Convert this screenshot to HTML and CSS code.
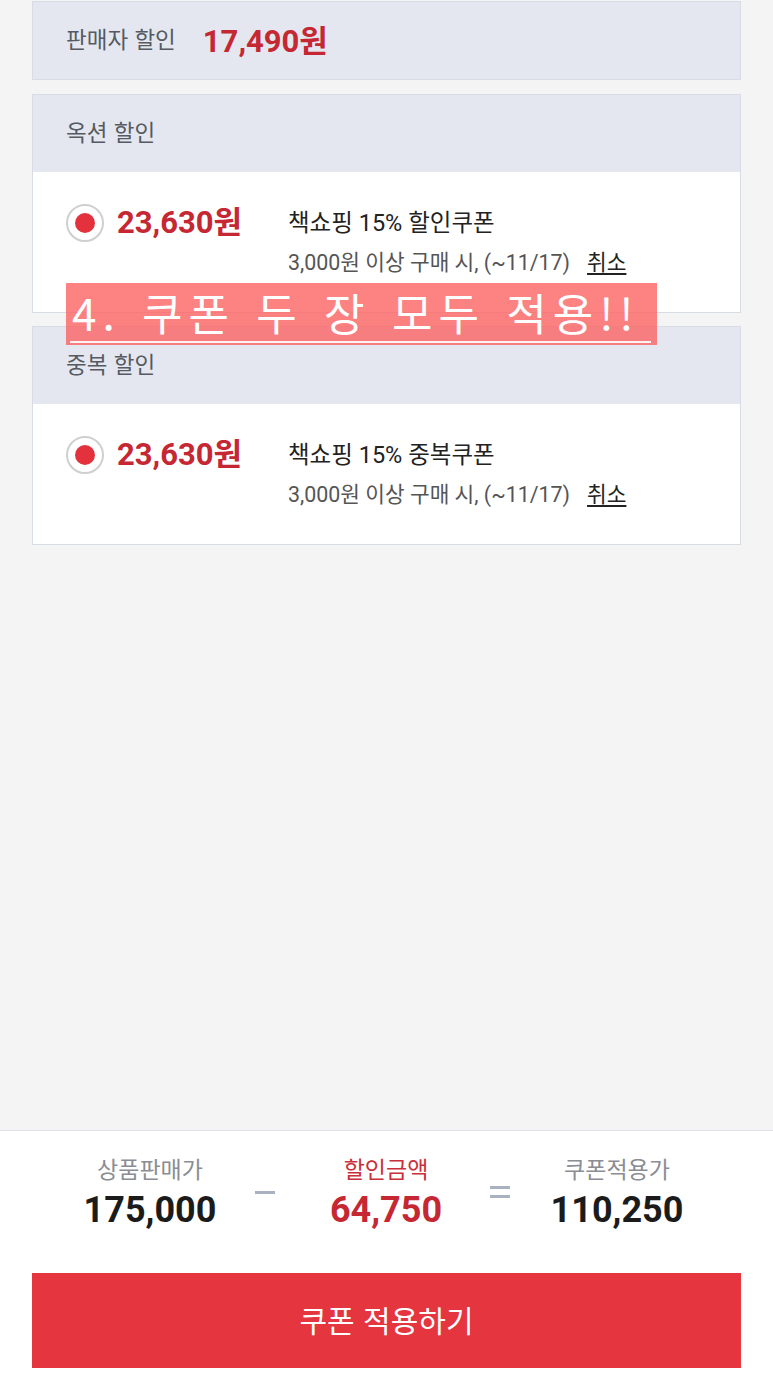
FILE: index.html
```html
<!DOCTYPE html>
<html lang="ko">
<head>
<meta charset="utf-8">
<title>쿠폰 적용</title>
<link rel="stylesheet" href="styles.css">
</head>
<body>
<div class="page">
  <main class="content">
    <section class="box seller">
      <span class="seller-label">판매자 할인</span>
      <span class="seller-price">17,490원</span>
    </section>

    <section class="box coupon">
      <div class="coupon-head">옥션 할인</div>
      <div class="coupon-body">
        <span class="radio"><span class="radio-dot"></span></span>
        <span class="coupon-price">23,630원</span>
        <div class="coupon-info">
          <div class="coupon-name">책쇼핑 15% 할인쿠폰</div>
          <div class="coupon-cond">3,000원 이상 구매 시, (~11/17)<a class="cancel">취소</a></div>
        </div>
      </div>
    </section>

    <section class="box coupon">
      <div class="coupon-head">중복 할인</div>
      <div class="coupon-body">
        <span class="radio"><span class="radio-dot"></span></span>
        <span class="coupon-price">23,630원</span>
        <div class="coupon-info">
          <div class="coupon-name">책쇼핑 15% 중복쿠폰</div>
          <div class="coupon-cond">3,000원 이상 구매 시, (~11/17)<a class="cancel">취소</a></div>
        </div>
      </div>
    </section>

    <div class="note"><span class="note-text">4. 쿠폰 두 장 모두 적용!!</span></div>
  </main>

  <footer class="footer">
    <div class="summary">
      <div class="sum-col">
        <div class="sum-label">상품판매가</div>
        <div class="sum-value">175,000</div>
      </div>
      <div class="op"><span class="bar"></span></div>
      <div class="sum-col red">
        <div class="sum-label">할인금액</div>
        <div class="sum-value">64,750</div>
      </div>
      <div class="op eq"><span class="bar"></span><span class="bar"></span></div>
      <div class="sum-col">
        <div class="sum-label">쿠폰적용가</div>
        <div class="sum-value">110,250</div>
      </div>
    </div>
    <button class="apply">쿠폰 적용하기</button>
  </footer>
</div>
</body>
</html>
```

FILE: styles.css
```css
* { box-sizing: border-box; }

html, body {
  margin: 0;
  padding: 0;
}

body {
  background: #f4f4f4;
  font-family: Roboto, "Noto Sans CJK KR", sans-serif;
  color: #222;
}

.page {
  display: flex;
  flex-direction: column;
  height: 1373px;
}

.content {
  position: relative;
  flex: 1;
  padding: 1px 32px 0 32px;
  display: flex;
  flex-direction: column;
  gap: 13px;
}

.box {
  border: 1px solid #d8dce4;
  width: 709px;
}

.seller {
  height: 79px;
  margin-bottom: 1px;
  background: #e4e7ef;
  display: flex;
  align-items: center;
  padding: 0 0 5px 33px;
  gap: 27px;
}

.seller-label {
  font-family: "Noto Sans CJK KR", sans-serif;
  font-size: 22.5px;
  color: #555a63;
}

.seller-price {
  font-size: 31px;
  font-weight: 700;
  color: #c52733;
}

.coupon {
  height: 219px;
  background: #fff;
  display: flex;
  flex-direction: column;
}

.coupon-head {
  height: 77px;
  background: #e4e7ef;
  display: flex;
  align-items: center;
  padding: 0 0 6px 33px;
  font-family: "Noto Sans CJK KR", sans-serif;
  font-size: 22.5px;
  color: #555a63;
}

.coupon-body {
  display: flex;
  align-items: flex-start;
  padding: 32px 0 0 33px;
}

.radio {
  width: 38px;
  height: 38px;
  border-radius: 50%;
  border: 2px solid #cfcfcf;
  background: #fff;
  display: flex;
  align-items: center;
  justify-content: center;
  flex: none;
}

.radio-dot {
  width: 20px;
  height: 20px;
  border-radius: 50%;
  background: #e3323c;
}

.coupon-price {
  width: 171px;
  margin-left: 13px;
  font-size: 31px;
  font-weight: 700;
  color: #c52733;
  line-height: 38px;
}

.coupon-info {
  display: flex;
  flex-direction: column;
}

.coupon-name {
  font-size: 23.5px;
  line-height: 38px;
  color: #222;
}

.coupon-cond {
  margin-top: 5px;
  font-size: 21.4px;
  line-height: 32px;
  color: #555;
}

.cancel {
  margin-left: 17px;
  color: #222;
  text-decoration: underline;
  text-underline-offset: 3px;
}

.note {
  position: absolute;
  left: 66px;
  top: 283px;
  width: 591px;
  height: 62px;
  background: rgba(252, 96, 96, 0.78);
  padding: 0 0 0 4px;
}

.note-text {
  display: block;
  font-family: "Noto Sans CJK KR", sans-serif;
  font-weight: 400;
  font-size: 44px;
  line-height: 58px;
  height: 60px;
  color: #fff;
  letter-spacing: 6px;
  word-spacing: 3px;
  white-space: nowrap;
  border-bottom: 2px solid rgba(255,255,255,0.9);
  width: 581px;
  padding-left: 2px;
}

.footer {
  height: 243px;
  background: #fff;
  border-top: 1px solid #e0e3ea;
  display: flex;
  flex-direction: column;
  padding: 0 32px 5px 32px;
}

.summary {
  display: grid;
  grid-template-columns: 100px 130px 112px 116px 118px;
  padding-left: 68px;
  padding-top: 22px;
  height: 142px;
}

.sum-col {
  display: flex;
  flex-direction: column;
  align-items: center;
}

.sum-label {
  font-family: "Noto Sans CJK KR", sans-serif;
  font-size: 23px;
  line-height: 30px;
  color: #8a8d93;
  white-space: nowrap;
}

.sum-value {
  font-size: 36px;
  font-weight: 700;
  line-height: 44px;
  color: #1b1b1b;
  margin-top: 5px;
  white-space: nowrap;
}

.red .sum-label { color: #c9303a; }
.red .sum-value { color: #c52733; }

.op {
  display: flex;
  flex-direction: column;
  align-items: center;
  padding-top: 38px;
  gap: 6px;
}

.op.eq { padding-top: 33px; }

.bar {
  width: 20px;
  height: 3px;
  background: #aab1c0;
}

.apply {
  height: 95px;
  width: 709px;
  margin-top: auto;
  border: none;
  background: #e5353f;
  color: #fff;
  font-family: "Noto Sans CJK KR", sans-serif;
  font-size: 30px;
  padding: 0 0 4px;
  cursor: pointer;
}
```
